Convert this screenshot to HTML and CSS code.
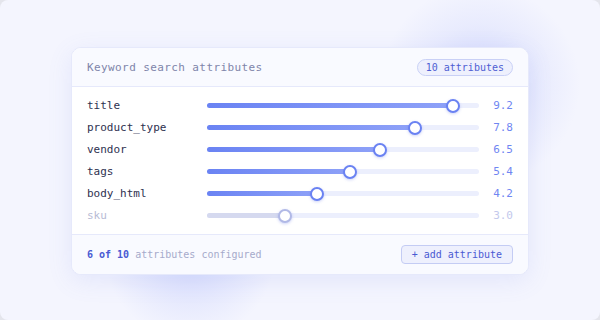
FILE: index.html
```html
<!DOCTYPE html>
<html>
<head>
  <title>Keyword search attributes</title>
  <link rel="stylesheet" href="styles.css">
</head>
<body>
  <div class="stage">
    <div class="card">
      <div class="card-head">
        <span class="title">Keyword search attributes</span>
        <span class="badge">10 attributes</span>
      </div>

      <div class="rows">
        <div class="row">
          <span class="name">title</span>
          <div class="track"><div class="fill" style="width: 92%"></div><div class="thumb" style="left: calc(92% - 11px)"></div></div>
          <span class="value">9.2</span>
        </div>
        <div class="row">
          <span class="name">product_type</span>
          <div class="track"><div class="fill" style="width: 78%"></div><div class="thumb" style="left: calc(78% - 11px)"></div></div>
          <span class="value">7.8</span>
        </div>
        <div class="row">
          <span class="name">vendor</span>
          <div class="track"><div class="fill" style="width: 65%"></div><div class="thumb" style="left: calc(65% - 11px)"></div></div>
          <span class="value">6.5</span>
        </div>
        <div class="row">
          <span class="name">tags</span>
          <div class="track"><div class="fill" style="width: 54%"></div><div class="thumb" style="left: calc(54% - 11px)"></div></div>
          <span class="value">5.4</span>
        </div>
        <div class="row">
          <span class="name">body_html</span>
          <div class="track"><div class="fill" style="width: 42%"></div><div class="thumb" style="left: calc(42% - 11px)"></div></div>
          <span class="value">4.2</span>
        </div>
        <div class="row off">
          <span class="name">sku</span>
          <div class="track"><div class="fill" style="width: 30%"></div><div class="thumb" style="left: calc(30% - 11px)"></div></div>
          <span class="value">3.0</span>
        </div>
      </div>

      <div class="card-foot">
        <span class="summary"><b>6 of 10</b> attributes configured</span>
        <button class="add">+ add attribute</button>
      </div>
    </div>
  </div>
</body>
</html>
```

FILE: styles.css
```css
html, body {
  margin: 0;
  background: #e4e5ec;
}
body {
  font-family: "DejaVu Sans Mono", "Liberation Mono", monospace;
}
.stage {
  width: 600px;
  height: 320px;
  border-radius: 8px;
  box-sizing: border-box;
  padding-top: 47px;
  background:
    radial-gradient(circle at 480px 85px, rgba(150, 165, 250, 0.4), rgba(150, 165, 250, 0.12) 60px, rgba(150, 165, 250, 0) 100px),
    radial-gradient(circle at 190px 255px, rgba(150, 165, 250, 0.32), rgba(150, 165, 250, 0) 85px),
    #f4f5fe;
}
.card {
  width: 458px;
  margin-left: 71px;
  background: #fff;
  border: 1px solid #e6e9fb;
  border-radius: 10px;
  box-sizing: border-box;
  overflow: hidden;
  box-shadow: 0 6px 24px rgba(110, 125, 230, 0.12);
}
.card-head {
  display: flex;
  align-items: center;
  justify-content: space-between;
  height: 38px;
  padding: 0 15px;
  background: #f9faff;
  border-bottom: 1px solid #e6e9fb;
}
.title {
  font-size: 11px;
  letter-spacing: 0.4px;
  color: #8085aa;
}
.badge {
  font-size: 10px;
  color: #4f5fd3;
  background: #eef0fd;
  border: 1px solid #c9d0f6;
  border-radius: 9px;
  padding: 2px 8px;
  line-height: 11px;
}
.rows {
  padding: 7px 15px 8px;
}
.row {
  display: flex;
  align-items: center;
  height: 22px;
}
.name {
  width: 120px;
  font-size: 11px;
  color: #2e3150;
}
.track {
  position: relative;
  width: 272px;
  height: 5px;
  border-radius: 3px;
  background: #eceffd;
}
.fill {
  height: 100%;
  border-radius: 3px;
  background: linear-gradient(90deg, #6a83f3, #8fa2f8);
}
.thumb {
  position: absolute;
  top: -4px;
  width: 14px;
  height: 14px;
  box-sizing: border-box;
  border: 2px solid #6a82f2;
  border-radius: 50%;
  background: #fff;
  box-shadow: 0 1px 3px rgba(90, 110, 230, 0.3);
}
.value {
  flex: 1;
  text-align: right;
  font-size: 11px;
  color: #6f86f2;
}
.off .name {
  color: #b7bbd5;
}
.off .fill {
  background: #d5d9ef;
}
.off .thumb {
  border-color: #b1b9e6;
}
.off .value {
  color: #c3c9ec;
}
.card-foot {
  display: flex;
  align-items: center;
  justify-content: space-between;
  height: 39px;
  padding: 0 15px;
  background: #f9faff;
  border-top: 1px solid #e6e9fb;
}
.summary {
  font-size: 10px;
  color: #a6aacb;
}
.summary b {
  color: #4a5ad3;
}
.add {
  font-family: inherit;
  font-size: 10px;
  color: #4a5ad3;
  background: #eef0fd;
  border: 1px solid #c4ccf4;
  border-radius: 4px;
  padding: 3px 10px;
  line-height: 11px;
}
```
